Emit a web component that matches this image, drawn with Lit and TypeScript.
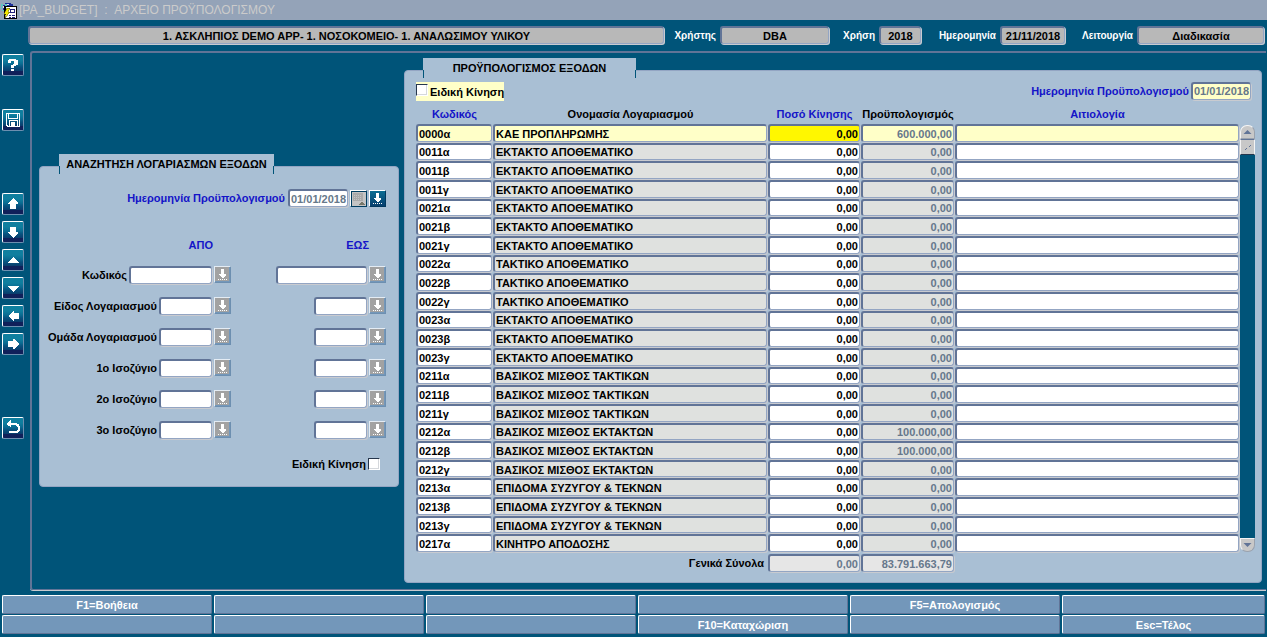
import { LitElement, html, css, svg, nothing } from "lit";
import { customElement, property } from "lit/decorators.js";

type Row = [code: string, name: string, budget: string];

const ROWS: Row[] = [
  ["0000α", "ΚΑΕ ΠΡΟΠΛΗΡΩΜΗΣ", "600.000,00"],
  ["0011α", "ΕΚΤΑΚΤΟ ΑΠΟΘΕΜΑΤΙΚΟ", "0,00"],
  ["0011β", "ΕΚΤΑΚΤΟ ΑΠΟΘΕΜΑΤΙΚΟ", "0,00"],
  ["0011γ", "ΕΚΤΑΚΤΟ ΑΠΟΘΕΜΑΤΙΚΟ", "0,00"],
  ["0021α", "ΕΚΤΑΚΤΟ ΑΠΟΘΕΜΑΤΙΚΟ", "0,00"],
  ["0021β", "ΕΚΤΑΚΤΟ ΑΠΟΘΕΜΑΤΙΚΟ", "0,00"],
  ["0021γ", "ΕΚΤΑΚΤΟ ΑΠΟΘΕΜΑΤΙΚΟ", "0,00"],
  ["0022α", "ΤΑΚΤΙΚΟ ΑΠΟΘΕΜΑΤΙΚΟ", "0,00"],
  ["0022β", "ΤΑΚΤΙΚΟ ΑΠΟΘΕΜΑΤΙΚΟ", "0,00"],
  ["0022γ", "ΤΑΚΤΙΚΟ ΑΠΟΘΕΜΑΤΙΚΟ", "0,00"],
  ["0023α", "ΕΚΤΑΚΤΟ ΑΠΟΘΕΜΑΤΙΚΟ", "0,00"],
  ["0023β", "ΕΚΤΑΚΤΟ ΑΠΟΘΕΜΑΤΙΚΟ", "0,00"],
  ["0023γ", "ΕΚΤΑΚΤΟ ΑΠΟΘΕΜΑΤΙΚΟ", "0,00"],
  ["0211α", "ΒΑΣΙΚΟΣ ΜΙΣΘΟΣ ΤΑΚΤΙΚΩΝ", "0,00"],
  ["0211β", "ΒΑΣΙΚΟΣ ΜΙΣΘΟΣ ΤΑΚΤΙΚΩΝ", "0,00"],
  ["0211γ", "ΒΑΣΙΚΟΣ ΜΙΣΘΟΣ ΤΑΚΤΙΚΩΝ", "0,00"],
  ["0212α", "ΒΑΣΙΚΟΣ ΜΙΣΘΟΣ ΕΚΤΑΚΤΩΝ", "100.000,00"],
  ["0212β", "ΒΑΣΙΚΟΣ ΜΙΣΘΟΣ ΕΚΤΑΚΤΩΝ", "100.000,00"],
  ["0212γ", "ΒΑΣΙΚΟΣ ΜΙΣΘΟΣ ΕΚΤΑΚΤΩΝ", "0,00"],
  ["0213α", "ΕΠΙΔΟΜΑ ΣΥΖΥΓΟΥ & ΤΕΚΝΩΝ", "0,00"],
  ["0213β", "ΕΠΙΔΟΜΑ ΣΥΖΥΓΟΥ & ΤΕΚΝΩΝ", "0,00"],
  ["0213γ", "ΕΠΙΔΟΜΑ ΣΥΖΥΓΟΥ & ΤΕΚΝΩΝ", "0,00"],
  ["0217α", "ΚΙΝΗΤΡΟ ΑΠΟΔΟΣΗΣ", "0,00"],
];

const CRITERIA = [
  "Κωδικός",
  "Είδος Λογαριασμού",
  "Ομάδα Λογαριασμού",
  "1ο Ισοζύγιο",
  "2ο Ισοζύγιο",
  "3ο Ισοζύγιο",
];

const FUNCTION_KEYS = [
  "F1=Βοήθεια", "", "", "", "F5=Απολογισμός", "",
  "", "", "", "F10=Καταχώριση", "", "Esc=Τέλος",
];

const GLYPHS: Record<string, unknown> = {
  help: svg`<path d="M5 3h7v1h2v5h-2v1h-2v2h-3v-3h2v-1h1v-3h-3v2h-3v-3h1z M7 13h3v2h-3z"/>`,
  save: svg`<path fill-rule="evenodd" d="M2 2h14v14h-13l-1-1z M3 3v11h1v1h1v-6h9v6h1v-12h-1v5h-10v-5z M5 3v4h8v-4z M6 10v5h1v-4h4v4h2v-5z" /><path d="M8 11h2v3h-2z"/>`,
  up: svg`<path d="M9 3l5 5v1h-2v5h-6v-5h-2v-1z"/>`,
  down: svg`<path d="M6 4h6v5h2v1l-5 5l-5 -5v-1h2z"/>`,
  prev: svg`<path d="M9 6l6 6h-12z"/>`,
  next: svg`<path d="M3 7h12l-6 6z"/>`,
  left: svg`<path d="M4 9l5-5h1v2h5v6h-5v2h-1z"/>`,
  right: svg`<path d="M15 9l-5-5h-1v2h-5v6h5v2h1z"/>`,
  back: svg`<path d="M2 5l5-4v3h5q4 1 4 5q0 5-5 5h-6v-2h6q3 0 3-3q0-2-3-3h-4v2z"/>`,
};

@customElement("tool-button")
export class ToolButton extends LitElement {
  @property() icon = "help";
  @property() label = "";

  static styles = css`
    :host { display: block; }
    button {
      display: block;
      box-sizing: border-box;
      width: 22px;
      height: 22px;
      padding: 0;
      border: 1px solid;
      border-color: #fff #6d8fb0 #6d8fb0 #fff;
      border-radius: 2px;
      background: linear-gradient(#0f7f9f 0 25%, #0a6c92 45%, #07527f 60%, #093c6c 80%, #10205a 82%);
    }
    svg { display: block; margin: 1px; fill: #fff; }
  `;

  render() {
    return html`<button type="button" aria-label=${this.label}>
      <svg width="18" height="18" viewBox="0 0 18 18" shape-rendering="crispEdges">${GLYPHS[this.icon]}</svg>
    </button>`;
  }
}

@customElement("app-root")
export class AppRoot extends LitElement {
  static styles = css`
    :host {
      --deep: #005479;
      --panel: #a9bfd4;
      --edge: #617497;
      --soft: #93a5c3;
      --blue: #1414c8;
      display: flex;
      flex-direction: column;
      box-sizing: border-box;
      min-height: 100vh;
      padding-bottom: 3px;
      background: var(--deep);
      color: #000;
      font: bold 11px/14px "Liberation Sans", Arial, sans-serif;
    }
    * { box-sizing: border-box; }
    input, button { font: inherit; margin: 0; }

    .titlebar {
      display: flex;
      align-items: center;
      gap: 1px;
      height: 20px;
      background: #94a3b8;
      color: #cbcbcb;
      font-weight: normal;
      font-size: 12px;
      white-space: pre;
    }
    .titlebar h1 { margin: 0; font: inherit; }
    .titlebar svg { display: block; width: 18px; height: 18px; }

    .field {
      display: block;
      min-width: 0;
      height: 18px;
      padding: 0 2px;
      border: solid;
      border-width: 2px 1px 1px 2px;
      border-color: var(--edge) var(--soft) var(--soft) var(--edge);
      border-radius: 3px;
      outline: 0;
      box-shadow: 1px 1px 0 #c9cbd0;
      background: #fff;
      color: #000;
    }

    .context {
      display: grid;
      grid-template-columns: 1fr 56px 109px 50px 42px 79px 65px 72px 127px;
      align-items: center;
      padding: 6px 3px 7px 28px;
    }
    .context label {
      padding: 1px 4px 0 0;
      color: #fff;
      font-size: 10px;
      text-align: right;
    }
    .context .field { width: 100%; background: #b8b8b8; text-align: center; }

    .workspace { display: flex; flex: 1; }
    .tools {
      display: flex;
      flex-direction: column;
      gap: 6px;
      width: 30px;
      padding: 3px 0 0 2px;
    }
    .tools .save { margin-top: 27px; }
    .tools .first { margin-top: 56px; }
    .tools .exit { margin-top: 56px; }

    main {
      display: flex;
      flex: 1;
      gap: 5px;
      margin-right: 1px;
      padding: 5px 4px 6px 7px;
      border: solid var(--edge);
      border-width: 2px 0 1px 2px;
      border-radius: 3px 0 0 3px;
      box-shadow: 0 1px 0 #c9cbd0;
    }
    .panel {
      border: 1px solid var(--soft);
      border-radius: 4px;
      background: var(--panel);
    }
    .tab {
      height: 20px;
      margin: -13px 0 0 18px;
      border: solid transparent;
      border-width: 0 1px;
      background: linear-gradient(var(--deep), var(--deep)) 0 100% / 1px 8px no-repeat border-box,
        linear-gradient(var(--deep), var(--deep)) 100% 100% / 1px 8px no-repeat border-box,
        var(--panel);
      font: inherit;
      line-height: 20px;
      text-align: center;
    }

    .search {
      align-self: flex-start;
      width: 360px;
      margin-top: 108px;
      padding: 0 12px 15px 0;
    }
    .search .tab { width: 215px; margin-left: 19px; }
    .line {
      display: flex;
      align-items: center;
      justify-content: flex-end;
      gap: 2px;
      white-space: nowrap;
    }
    .blue { color: var(--blue); }
    .date-line { margin-top: 15px; }
    .date-line label { padding-right: 1px; }
    .date { width: 60px; padding: 0 1px; color: #66788a; }
    .criteria {
      display: grid;
      grid-template-columns: 191px 1fr;
      grid-template-rows: 28px;
      grid-auto-rows: 31px;
      align-items: center;
      padding-top: 24px;
    }
    .criteria .blue { padding-right: 17px; text-align: right; }
    .criteria .blue:first-child { padding-right: 18px; }
    .short { width: 53px; }
    .wide { width: 83px; }
    .wider { width: 91px; }
    .pick {
      flex: none;
      width: 17px;
      height: 17px;
      padding: 0;
      border: 1px solid;
      border-color: #e4ecf4 #6d8fb0 #6d8fb0 #e4ecf4;
      background: #a2a2a2;
      box-shadow: inset -1px -1px 0 #7397ba;
    }
    .pick svg { display: block; width: 15px; height: 15px; }
    .pick.live { background: linear-gradient(#0a6c92, #073f6e); border-color: #fff #00385e #00385e #fff; box-shadow: none; }
    .pick.calendar { background: #c4c4c4; border-color: #fff #003d60 #003d60 #fff; box-shadow: inset 1px 1px 0 #003d60; }
    .tick-line { margin-top: 12px; padding-right: 6px; }

    input[type="checkbox"] {
      appearance: none;
      width: 12px;
      height: 12px;
      border: 1px solid;
      border-color: #26364c #fff #fff #26364c;
      background: #fff;
      box-shadow: inset -1px -1px 0 #d5d8dc;
    }

    .budget {
      display: flex;
      flex: 1;
      flex-direction: column;
      min-width: 0;
      margin-top: 12px;
      padding: 0 6px 9px 11px;
    }
    .budget .tab { width: 213px; margin-left: 7px; }
    .top {
      display: flex;
      justify-content: space-between;
      padding: 4px 4px 3px 0;
    }
    .top .line { height: 17px; }
    .special {
      display: flex;
      align-items: center;
      gap: 2px;
      height: 19px;
      background: #ffffc8;
    }
    .special input { margin-bottom: 4px; }
    .top .date { background: #ffffc8; }

    .data { display: flex; flex: 1; }
    table { display: flex; flex: 1; flex-direction: column; min-width: 0; }
    tr {
      display: grid;
      grid-template-columns: 77px 275px 93px 94px 1fr;
    }
    th, td { padding: 0; font: inherit; }
    thead tr { height: 20px; line-height: 20px; }
    th { text-align: center; white-space: nowrap; }
    tbody { display: flex; flex: 1; flex-direction: column; }
    tbody tr { flex: 1; }
    td { display: flex; padding: 0 1px 1px 0; }
    td .field { flex: 1; width: 100%; height: auto; padding: 1px 1px 0; line-height: 12px; }
    .num { text-align: right; }
    .locked { background: #dfe1df; }
    .muted { color: #66788c; }
    .current .field { background: #ffffc8; }
    .current .active { background: #fff700; }
    tfoot tr { height: 19px; margin-top: 1px; }
    tfoot td .field { background: #e6e6e6; }
    tfoot th { grid-column: 1 / 3; padding-right: 4px; line-height: 19px; text-align: right; }

    .scroll {
      display: flex;
      flex-direction: column;
      width: 15px;
      margin: 21px 0;
      background: linear-gradient(var(--deep), var(--deep)) 50% 50% / 15px calc(100% - 28px) no-repeat;
    }
    .scroll button {
      height: 14px;
      padding: 0;
      border: 1px solid;
      border-color: #f4f4f4 #9aa2ae #9aa2ae #f4f4f4;
      background: #c8c8c8;
    }
    .scroll svg { display: block; width: 13px; height: 12px; }
    .scroll .start { border-radius: 7px 7px 0 0; }
    .scroll .end { margin-top: auto; border-radius: 0 0 7px 7px; }
    .scroll .thumb { height: 16px; border-color: #617497 #f4f4f4 #26364c #f4f4f4; }

    footer {
      display: grid;
      grid-template-columns: repeat(5, minmax(0, 210fr)) minmax(0, 203fr);
      gap: 1px 2px;
      padding: 5px 2px 0;
    }
    footer button {
      height: 19px;
      padding: 0;
      border: 1px solid;
      border-color: #fff #617497 #617497 #fff;
      border-radius: 2px;
      background: #7397ba;
      color: #fff;
    }
  `;

  private picker(label: string, live = false) {
    return html`<button type="button" class="pick ${live ? "live" : ""}" aria-label=${label}>
      <svg viewBox="0 0 15 15" fill="#fff" shape-rendering="crispEdges">
        <path d="M6 2h3v5h2v1l-3 3h-1l-3-3v-1h2z" />
        <path d="M3 12h1v1h-1z M5 12h1v1h-1z M7 12h1v1h-1z M9 12h1v1h-1z M11 12h1v1h-1z" />
      </svg>
    </button>`;
  }

  private contextField(id: string, label: string, value: string) {
    return html`<label for=${id}>${label}</label><input class="field" id=${id} readonly .value=${value} />`;
  }

  private criterion(label: string, i: number) {
    return html`
      <div class="line">
        <label for="from${i}">${label}</label>
        <input class="field ${i ? "short" : "wide"}" id="from${i}" />
        ${this.picker(label + " από")}
      </div>
      <div class="line">
        <input class="field ${i ? "short" : "wider"}" aria-label="${label} έως" />
        ${this.picker(label + " έως")}
      </div>`;
  }

  private row([code, name, budget]: Row, i: number) {
    return html`<tr class=${i ? nothing : "current"}>
      <td><input class="field" aria-label="Κωδικός" .value=${code} /></td>
      <td><input class="field locked" aria-label="Ονομασία" readonly .value=${name} /></td>
      <td><input class="field num active" aria-label="Ποσό" .value=${"0,00"} /></td>
      <td><input class="field num locked muted" aria-label="Προϋπολογισμός" readonly .value=${budget} /></td>
      <td><input class="field" aria-label="Αιτιολογία" /></td>
    </tr>`;
  }

  render() {
    return html`
      <header class="titlebar">
        <svg viewBox="0 0 18 18" shape-rendering="crispEdges" aria-hidden="true">
          <path fill="#1c2f9c" d="M5 2h6v1h2v4h-8v2h-2v-5h2z" />
          <path fill="#5cc6c0" d="M1 3h2v2h-1v3h-1z M2 9h2v1h-2z M5 3h2v2h-2z" />
          <path fill="#dfe6f5" d="M7 3h2v1h-2z M3 5h1v2h-1z" />
          <path fill="#000" d="M4 5h13v13h-13z" />
          <path fill="#fff" d="M6 6h10v11h-11v-3h1z" />
          <path fill="#20207a" d="M10 8h5v4h-5z M9 14h2v1h-2z M12 14h3v1h-3z M9 16h2v1h-2z M12 16h3v1h-3z" />
          <path fill="#fff" d="M11 9h3v2h-3z" />
          <path fill="#f6ea00" stroke="#55500a" stroke-width=".5" d="M7 7h3l-2 4h2l-5 6l1-4h-2z" />
        </svg>
        <h1>[PA_BUDGET]  :  ΑΡΧΕΙΟ ΠΡΟΫΠΟΛΟΓΙΣΜΟΥ</h1>
      </header>

      <section class="context">
        <input class="field" aria-label="Εφαρμογή" readonly
          .value=${"1. ΑΣΚΛΗΠΙΟΣ DEMO APP- 1. ΝΟΣΟΚΟΜΕΙΟ- 1. ΑΝΑΛΩΣΙΜΟΥ ΥΛΙΚΟΥ"} />
        ${this.contextField("user", "Χρήστης", "DBA")}
        ${this.contextField("year", "Χρήση", "2018")}
        ${this.contextField("today", "Ημερομηνία", "21/11/2018")}
        ${this.contextField("mode", "Λειτουργία", "Διαδικασία")}
      </section>

      <div class="workspace">
        <nav class="tools">
          <tool-button icon="help" label="Βοήθεια"></tool-button>
          <tool-button class="save" icon="save" label="Αποθήκευση"></tool-button>
          <tool-button class="first" icon="up" label="Πρώτη"></tool-button>
          <tool-button icon="down" label="Τελευταία"></tool-button>
          <tool-button icon="prev" label="Προηγούμενη"></tool-button>
          <tool-button icon="next" label="Επόμενη"></tool-button>
          <tool-button icon="left" label="Αριστερά"></tool-button>
          <tool-button icon="right" label="Δεξιά"></tool-button>
          <tool-button class="exit" icon="back" label="Επιστροφή"></tool-button>
        </nav>

        <main>
          <section class="panel search">
            <h2 class="tab">ΑΝΑΖΗΤΗΣΗ ΛΟΓΑΡΙΑΣΜΩΝ ΕΞΟΔΩΝ</h2>
            <div class="line date-line">
              <label class="blue" for="search-date">Ημερομηνία Προϋπολογισμού</label>
              <input class="field date" id="search-date" .value=${"01/01/2018"} />
              <button type="button" class="pick calendar" aria-label="Ημερολόγιο">
                <svg viewBox="0 0 15 15" shape-rendering="crispEdges">
                  <path fill="#aaa" d="M2 2h10v8h-10z" />
                  <path stroke="#c4c4c4" stroke-dasharray="1 1" d="M3 4.500h8M3 6.500h8M3 8.500h8" />
                  <path fill="#77776a" d="M11 10l3 4h-7z" />
                </svg>
              </button>
              ${this.picker("Επιλογή ημερομηνίας", true)}
            </div>
            <div class="criteria">
              <span class="blue">ΑΠΟ</span><span class="blue">ΕΩΣ</span>
              ${CRITERIA.map((c, i) => this.criterion(c, i))}
            </div>
            <div class="line tick-line">
              <label for="search-special">Ειδική Κίνηση</label>
              <input type="checkbox" id="search-special" />
            </div>
          </section>

          <section class="panel budget">
            <h2 class="tab">ΠΡΟΫΠΟΛΟΓΙΣΜΟΣ ΕΞΟΔΩΝ</h2>
            <div class="top">
              <div class="special">
                <input type="checkbox" id="special" /><label for="special">Ειδική Κίνηση</label>
              </div>
              <div class="line">
                <label class="blue" for="budget-date">Ημερομηνία Προϋπολογισμού</label>
                <input class="field date" id="budget-date" .value=${"01/01/2018"} />
              </div>
            </div>
            <div class="data">
              <table>
                <thead>
                  <tr>
                    <th class="blue">Κωδικός</th>
                    <th>Ονομασία Λογαριασμού</th>
                    <th class="blue">Ποσό Κίνησης</th>
                    <th>Προϋπολογισμός</th>
                    <th class="blue">Αιτιολογία</th>
                  </tr>
                </thead>
                <tbody>${ROWS.map((r, i) => this.row(r, i))}</tbody>
                <tfoot>
                  <tr>
                    <th>Γενικά Σύνολα</th>
                    <td><input class="field num muted" aria-label="Σύνολο ποσού" readonly .value=${"0,00"} /></td>
                    <td><input class="field num muted" aria-label="Σύνολο προϋπολογισμού" readonly .value=${"83.791.663,79"} /></td>
                  </tr>
                </tfoot>
              </table>
              <div class="scroll">
                <button type="button" class="start" aria-label="Πάνω">
                  <svg viewBox="0 0 13 12" fill="#617497"><path d="M6.500 4l4 4h-8z" /></svg>
                </button>
                <button type="button" class="thumb" aria-label="Κύλιση">
                  <svg viewBox="0 0 13 12" stroke="#617497"><path d="M4 9l2-2M8 6l2-2" /></svg>
                </button>
                <button type="button" class="end" aria-label="Κάτω">
                  <svg viewBox="0 0 13 12" fill="#617497"><path d="M6.500 8l4-4h-8z" /></svg>
                </button>
              </div>
            </div>
          </section>
        </main>
      </div>

      <footer>${FUNCTION_KEYS.map((k) => html`<button type="button">${k}</button>`)}</footer>
    `;
  }
}
